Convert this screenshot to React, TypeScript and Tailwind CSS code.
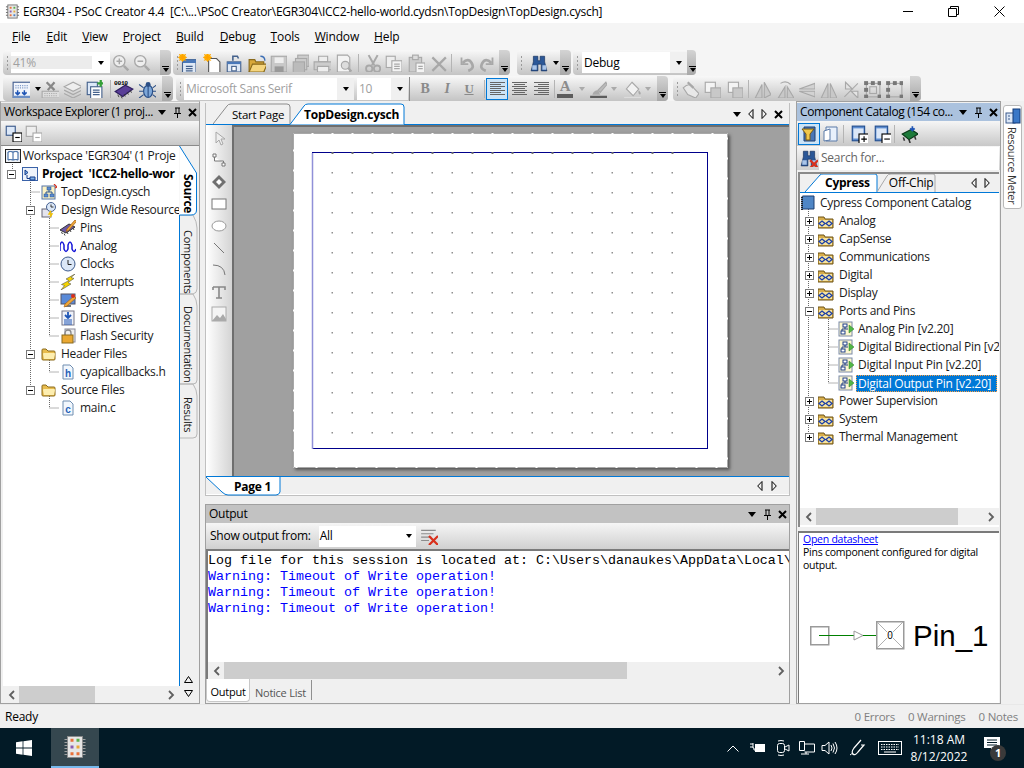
import React from "react"

const I = ({ children, s = 16, className = "" }: { children?: React.ReactNode; s?: number; className?: string }) => (
  <svg width={s} height={s} viewBox="0 0 16 16" className={"shrink-0 " + className}>
    {children}
  </svg>
)

const G = "#a8a8a8"
const GL = "#dcdcdc"

// toolbar icons (mostly disabled grey ones)
const ZoomIcon = ({ plus }: { plus?: boolean }) => (
  <I s={18}>
    <circle cx="6.5" cy="6.5" r="5" fill="#eee" stroke={G} strokeWidth="1.2" />
    <path d="M4 6.5h5" stroke={G} strokeWidth="1.3" />
    {plus && <path d="M6.5 4v5" stroke={G} strokeWidth="1.3" />}
    <path d="M10.5 10.5l4 4" stroke={G} strokeWidth="2.2" />
  </I>
)
const Star = ({ x = 4, y = 3 }: { x?: number; y?: number }) => (
  <g>
    <circle cx={x} cy={y} r="3" fill="#ffb400" />
    <path d={`M${x - 4} ${y}h8M${x} ${y - 4}v8M${x - 3} ${y - 3}l6 6M${x - 3} ${y + 3}l6-6`} stroke="#ffa000" strokeWidth=".8" />
  </g>
)
const NewProject = () => (
  <I s={18}>
    <rect x="4" y="5" width="12" height="12" fill="#dfe9f6" stroke="#44618c" />
    <rect x="4" y="5" width="12" height="3" fill="#4a78b8" />
    <path d="M7 11h6M7 13h6M7 15h6" stroke="#44618c" />
    <Star />
  </I>
)
const NewFile = () => (
  <I s={18}>
    <path d="M5 4h7l3 3v10H5z" fill="#fff" stroke="#555" />
    <Star />
  </I>
)
const OpenProject = () => (
  <I s={18}>
    <rect x="2" y="7" width="12" height="9" fill="#dfe9f6" stroke="#44618c" />
    <rect x="2" y="7" width="12" height="2" fill="#4a78b8" />
    <rect x="6" y="11" width="4" height="4" fill="#fff" stroke="#44618c" />
    <path d="M7 6V2h4l1 2" fill="none" stroke="#44618c" strokeWidth="1.4" />
  </I>
)
const OpenFolder = () => (
  <I s={18}>
    <path d="M1 5h5l1 2h7v9H1z" fill="#d9a83a" stroke="#8a6a1c" />
    <path d="M1 16l3-7h13l-3 7z" fill="#f5d57e" stroke="#8a6a1c" />
    <path d="M11 2q4 0 4 4" fill="none" stroke="#3d6fb5" strokeWidth="1.2" />
  </I>
)
const Save = () => (
  <I s={18}>
    <rect x="2" y="2" width="14" height="14" fill="#c8c8c8" stroke={G} />
    <rect x="5" y="3" width="8" height="5" fill="#eee" />
    <rect x="5" y="11" width="8" height="5" fill="#999" />
  </I>
)
const SaveAll = () => (
  <I s={18}>
    <rect x="6" y="1" width="10" height="10" fill="#ccc" stroke={G} />
    <rect x="4" y="4" width="10" height="10" fill="#ccc" stroke={G} />
    <rect x="2" y="7" width="10" height="10" fill="#bbb" stroke={G} />
  </I>
)
const Print = () => (
  <I s={18}>
    <path d="M5 2h8v5H5z" fill="#eee" stroke={G} />
    <path d="M1 7h16v7H1z" fill="#ccc" stroke={G} />
    <path d="M4 11h10v5H4z" fill="#eee" stroke={G} />
  </I>
)
const Preview = () => (
  <I s={18}>
    <path d="M3 1h9l2 2v13H3z" fill="#f4f4f4" stroke={G} />
    <circle cx="10" cy="10" r="3.5" fill="#ddd" stroke={G} />
    <path d="M12.5 12.5l3 3" stroke={G} strokeWidth="2" />
  </I>
)
const Cut = () => (
  <I s={18}>
    <path d="M5 1l5 9M13 1l-5 9" stroke={G} strokeWidth="1.8" />
    <circle cx="5.5" cy="13" r="2.8" fill="none" stroke={G} strokeWidth="1.6" />
    <circle cx="12.5" cy="13" r="2.8" fill="none" stroke={G} strokeWidth="1.6" />
  </I>
)
const Copy = () => (
  <I s={18}>
    <rect x="2" y="2" width="8" height="10" fill="#eee" stroke={G} />
    <rect x="7" y="6" width="9" height="10" fill="#f4f4f4" stroke={G} />
    <path d="M9 9h5M9 11h5M9 13h5" stroke={G} />
  </I>
)
const Paste = () => (
  <I s={18}>
    <rect x="2" y="3" width="11" height="13" fill="#ccc" stroke={G} />
    <rect x="5" y="1" width="5" height="4" fill="#ddd" stroke={G} />
    <rect x="8" y="8" width="8" height="9" fill="#f4f4f4" stroke={G} />
    <path d="M10 11h4M10 13h4" stroke={G} />
  </I>
)
const Close = () => (
  <I s={18}>
    <path d="M3 3l12 12M15 3L3 15" stroke={G} strokeWidth="2" />
  </I>
)
const Undo = ({ flip }: { flip?: boolean }) => (
  <I s={18} className={flip ? "-scale-x-100" : ""}>
    <path d="M4 3v6h6" fill="none" stroke={G} strokeWidth="1.6" />
    <path d="M5 8q5-5 8 0t-3 7" fill="none" stroke={G} strokeWidth="2.4" />
  </I>
)
const Binoculars = ({ x }: { x?: boolean }) => (
  <I s={18}>
    <path d="M3 2h4v4h2V2h4v5l2 8h-5V9H7v6H1l2-8z" fill="#2b5797" stroke="#17305c" strokeWidth=".6" />
    <rect x="2" y="10" width="4" height="4" fill="#a9c4e8" />
    <rect x="11" y="10" width="3.5" height="4" fill="#a9c4e8" />
    {x && <path d="M9 10l7 7M16 10l-7 7" stroke="#d8301c" strokeWidth="2" />}
  </I>
)
const Triangle = ({ className = "" }: { className?: string }) => (
  <span className={"inline-block w-0 h-0 border-l-[3.5px] border-r-[3.5px] border-t-[4px] border-l-transparent border-r-transparent border-t-black " + className} />
)
const Sep = ({ ml = "" }: { ml?: string }) => <span className={"w-px h-[18px] bg-[#b4b4b4] shrink-0 " + ml} />
const Grip = () => (
  <span className="w-[3px] h-[15px] shrink-0 ml-[3px] bg-[radial-gradient(circle,#9a9a9a_1px,transparent_1px)] bg-[length:3px_4px]" />
)
const Slot = ({ children, w = "w-[22px]" }: { children?: React.ReactNode; w?: string }) => (
  <span className={"flex items-center justify-center shrink-0 h-[22px] " + w}>{children}</span>
)

const Bar = ({ w, ml = "", children }: { w: string; ml?: string; children?: React.ReactNode }) => (
  <div className={"flex items-center h-[25px] rounded-[4px] bg-linear-to-b from-[#f8f8f8] to-[#c4c4c4] overflow-hidden shrink-0 relative " + w + " " + ml}>
    {children}
    <span className="ml-auto w-[11px] h-full bg-linear-to-b from-[#d4d4d4] to-[#a8a8a8] flex flex-col items-center justify-end pb-[3px] shrink-0">
      <span className="w-[7px] h-px bg-black mb-px" />
      <Triangle />
    </span>
  </div>
)

const Combo = ({ w, text, gray, h = "h-[22px]" }: { w: string; text: string; gray?: boolean; h?: string }) => (
  <div className={"flex items-center bg-white shrink-0 " + w + " " + h}>
    <span className={"flex-1 pl-[2px] text-[12px] truncate " + (gray ? "text-[#a0a0a0]" : "text-black")}>{text}</span>
    <span className="w-[17px] h-full flex items-center justify-center bg-[#f0f0f0]">
      <Triangle />
    </span>
  </div>
)

const Menu = () => (
  <div className="h-[27px] flex items-center text-[12px] text-black shrink-0 tracking-[-0.15px]">
    {[
      ["F", "ile", "ml-[12px]"],
      ["E", "dit", "ml-[16px]"],
      ["V", "iew", "ml-[15px]"],
      ["P", "roject", "ml-[15px]"],
      ["B", "uild", "ml-[15px]"],
      ["D", "ebug", "ml-[16px]"],
      ["T", "ools", "ml-[15px]"],
      ["W", "indow", "ml-[15px]"],
      ["H", "elp", "ml-[15px]"],
    ].map(([a, b, c]) => (
      <span key={a} className={c}>
        <span className="underline">{a}</span>
        {b}
      </span>
    ))}
  </div>
)

const TitleBar = () => (
  <div className="h-[23px] bg-white flex items-center shrink-0">
    <I className="ml-[5px]" s={15}>
      <rect x="3" y="1" width="10" height="14" fill="#e6e6e6" stroke="#777" />
      <path d="M1 3h2M1 6h2M1 9h2M1 12h2M13 3h2M13 6h2M13 9h2M13 12h2" stroke="#666" />
      <rect x="5" y="3" width="2" height="2" fill="#e8703a" />
      <rect x="9" y="3" width="2" height="2" fill="#5ab04a" />
      <rect x="5" y="7" width="2" height="2" fill="#8a5bb0" />
      <rect x="9" y="7" width="2" height="2" fill="#e8a83a" />
      <rect x="5" y="11" width="2" height="2" fill="#e8703a" />
      <rect x="9" y="11" width="2" height="2" fill="#4a80c8" />
    </I>
    <span className="ml-[3px] text-[12px] text-black whitespace-pre tracking-[-0.25px]">{"EGR304 - PSoC Creator 4.4  [C:\\...\\PSoC Creator\\EGR304\\ICC2-hello-world.cydsn\\TopDesign\\TopDesign.cysch]"}</span>
    <div className="ml-auto flex items-center mr-[19px] gap-[35px]">
      <span className="w-[10px] h-px bg-black" />
      <svg width="11" height="11" viewBox="0 0 11 11">
        <path d="M.5 2.5h8v8h-8zM2.5 2.5v-2h8v8h-2" fill="none" stroke="#000" />
      </svg>
      <svg width="11" height="11" viewBox="0 0 11 11">
        <path d="M.5.5l10 10M10.5.5l-10 10" stroke="#000" />
      </svg>
    </div>
  </div>
)

const Toolbars = () => (
  <div className="flex flex-col gap-px shrink-0">
    <div className="flex h-[25px] pl-[3px]">
      <Bar w="w-[168px]">
        <Grip />
        <div className="ml-[2px]">
          <div className="w-[99px] h-[21px] flex items-center bg-white">
            <span className="flex-1 pl-[2px] text-[12px] text-[#a0a0a0] bg-[#ececec] h-[13px] leading-[13px] mr-[6px]">41%</span>
            <span className="w-[8px] flex mr-[4px]">
              <Triangle />
            </span>
          </div>
        </div>
        <Slot w="w-[20px] ml-[1px]"><ZoomIcon plus /></Slot>
        <Slot><ZoomIcon /></Slot>
      </Bar>
      <Bar w="w-[337px]" ml="ml-[2px]">
        <Grip />
        <Slot w="w-[22px] -ml-[3px]"><NewProject /></Slot>
        <Slot w="w-[22px] ml-[3px]"><NewFile /></Slot>
        <Slot><OpenProject /></Slot>
        <Slot w="w-[22px] ml-[1px]"><OpenFolder /></Slot>
        <Slot w="w-[22px] -ml-[1px]"><Save /></Slot>
        <Slot><SaveAll /></Slot>
        <Slot><Print /></Slot>
        <Slot w="w-[22px] -ml-[1px]"><Preview /></Slot>
        <Sep ml="ml-[4px]" />
        <Slot w="w-[22px] ml-[2px]"><Cut /></Slot>
        <Slot w="w-[22px] -ml-[1px]"><Copy /></Slot>
        <Slot w="w-[22px] ml-[1px]"><Paste /></Slot>
        <Slot><Close /></Slot>
        <Sep ml="ml-[2px]" />
        <Slot w="w-[22px] ml-[3px]"><Undo /></Slot>
        <Slot><Undo flip /></Slot>
      </Bar>
      <Bar w="w-[54px]" ml="ml-[7px]">
        <Grip />
        <Slot w="w-[26px] ml-[3px]"><Binoculars /></Slot>
        <Triangle className="ml-[1px]" />
      </Bar>
      <Bar w="w-[123px]" ml="ml-[2px]">
        <Grip />
        <div className="ml-[3px]"><Combo w="w-[105px]" text="Debug" h="h-[21px]" /></div>
      </Bar>
    </div>
    <div className="flex h-[25px] pl-[3px]">
      <Bar w="w-[170px]">
        <Slot w="w-[26px] ml-[5px]">
          <I s={18}>
            <rect x="1" y="2" width="16" height="14" fill="#f2f5fb" stroke="#445f90" />
            <path d="M3 5h12M3 7h12" stroke="#7d99c8" strokeDasharray="1 1" />
            <path d="M5 9v4M3 11l2 2 2-2M11 9v4M9 11l2 2 2-2" fill="none" stroke="#1f55b5" strokeWidth="1.3" />
            <rect x="1" y="14" width="16" height="2" fill="#6c8fc5" />
          </I>
        </Slot>
        <Triangle className="ml-[1px]" />
        <Slot w="w-[22px] -ml-[2px]">
          <I s={18}>
            <path d="M1 10h16v6H1z" fill="#ddd" stroke={G} />
            <path d="M3 12h12M3 14h12" stroke={G} strokeDasharray="1 1" />
            <path d="M5 2l7 7M12 2L6 9" stroke="#888" strokeWidth="2" />
          </I>
        </Slot>
        <Slot>
          <I s={18}>
            <path d="M1 6l8-4 8 4-8 4z" fill="#eee" stroke={G} />
            <path d="M1 9l8 4 8-4M1 12l8 4 8-4" fill="none" stroke={G} />
          </I>
        </Slot>
        <Slot>
          <I s={18}>
            <rect x="2" y="2" width="9" height="11" fill="#dce8f8" stroke="#44618c" />
            <rect x="5" y="6" width="10" height="11" fill="#fff" stroke="#44618c" />
            <path d="M7 9h6M7 11h6M7 13h6" stroke="#44618c" />
            <path d="M14 0v6M11 3h6" stroke="#34a038" strokeWidth="2" />
          </I>
        </Slot>
        <Sep ml="ml-[5px]" />
        <Slot w="w-[24px] ml-[1px]">
          <I s={20}>
            <path d="M1 10l8-5 6 3-8 6z" fill="#5a3f98" stroke="#2f1f60" />
            <path d="M3 12.5l1 2M5.5 13.5l1 2M8 12l1 2M10.5 10.5l1 2M13 9l1 2" stroke="#333" strokeWidth=".7" />
            <text x="0" y="4.5" fontSize="5" fontFamily="Liberation Mono" fontWeight="700" fill="#000">0010</text>
          </I>
        </Slot>
        <Slot>
          <I s={18}>
            <ellipse cx="9" cy="10" rx="4" ry="5.5" fill="#7da7d8" stroke="#2b4f86" />
            <circle cx="9" cy="4" r="2.2" fill="#2b4f86" />
            <path d="M5 7L1 4M13 7l4-3M5 10H1M13 10h4M5 13l-4 3M13 13l4 3M9 5v10" stroke="#2b4f86" />
          </I>
        </Slot>
      </Bar>
      <Bar w="w-[492px]" ml="ml-[3px]">
        <Grip />
        <div className="ml-[2px]"><Combo w="w-[170px]" text="Microsoft Sans Serif" gray /></div>
        <div className="ml-[3px]"><Combo w="w-[51px]" text="10" gray /></div>
        <span className="w-px h-[24px] bg-[#888] ml-px" />
        <Slot w="w-[22px] ml-[4px]"><b className="font-['Liberation_Serif',serif] text-[14px] text-[#8a8a8a]">B</b></Slot>
        <Slot><i className="font-['Liberation_Serif',serif] font-bold text-[14px] text-[#8a8a8a]">I</i></Slot>
        <Slot><span className="font-['Liberation_Serif',serif] font-bold text-[13px] text-[#8a8a8a] underline">U</span></Slot>
        <Sep ml="ml-[4px]" />
        {["left", "center", "right"].map((a, i) => (
          <span key={a} className={"w-[22px] h-[22px] flex items-center justify-center shrink-0 " + (i === 0 ? "ml-px border border-[#0078d7] bg-[#cce4f7]" : "")}>
            <svg width="15" height="13" viewBox="0 0 15 13">
              {[0, 2, 4, 6, 8, 10, 12].map((y, j) => {
                const short = j % 2 === 1
                const x = a === "left" || !short ? 0 : a === "center" ? 2 : 4
                return <rect key={y} x={x} y={y} width={short ? 11 : 15} height="1" fill="#666" />
              })}
            </svg>
          </span>
        ))}
        <Sep ml="ml-[2px]" />
        <Slot w="w-[20px]">
          <span className="flex flex-col items-center leading-none">
            <span className="text-[15px] text-[#8c8c8c] font-['Liberation_Serif',serif] font-bold h-[12px] leading-[12px]">A</span>
            <span className="w-[16px] h-[4px] bg-[#5c5c5c] mt-[2px]" />
          </span>
        </Slot>
        <Triangle className="!border-t-[#aaa] ml-[4px]" />
        <Slot w="w-[20px] ml-[3px]">
          <I s={18}>
            <path d="M15 2L8 9l2 2 6-7z" fill="#bbb" stroke={G} />
            <path d="M8 9q-4 0-5 4h7z" fill="#aaa" />
            <rect x="1" y="14" width="16" height="3" fill="#5c5c5c" />
          </I>
        </Slot>
        <Triangle className="!border-t-[#aaa] ml-[3px]" />
        <Slot w="w-[22px] ml-[4px]">
          <I s={18}>
            <path d="M8 2l6 6-5 6-6-6z" fill="#f2f2f2" stroke={G} />
            <path d="M14 9q3 3 1 4-2-1-1-4z" fill={G} />
            <rect x="1" y="15" width="15" height="2" fill={GL} />
          </I>
        </Slot>
        <Triangle className="!border-t-[#aaa] ml-[2px]" />
      </Bar>
      <Bar w="w-[248px]" ml="ml-[5px]">
        <Grip />
        <Slot>
          <I s={18}>
            <path d="M2 7q6-6 10 1l4 4-3 4-7-3z" fill="#e8e8e8" stroke={G} />
            <path d="M6 2l5 5" stroke={G} strokeWidth="2" />
          </I>
        </Slot>
        {[0, 1].map((k) => (
          <Slot key={k}>
            <I s={18}>
              <rect x={k ? 3 : 2} y="2" width="9" height="9" fill="#f4f4f4" stroke={G} />
              <rect x="7" y="7" width="9" height="9" fill="#c8c8c8" stroke={G} />
            </I>
          </Slot>
        ))}
        <Sep ml="ml-[3px]" />
        <Slot w="w-[23px] ml-px">
          <I s={18}>
            <path d="M8 4v12H2zM10 2v14l6-3z" fill="#c8c8c8" stroke={G} />
          </I>
        </Slot>
        <Slot w="w-[23px]">
          <I s={18}>
            <path d="M8 6v10H2zM10 6v10h6z" fill="#c8c8c8" stroke={G} />
            <path d="M4 3q5-3 9 1" fill="none" stroke={G} />
          </I>
        </Slot>
        <Slot w="w-[22px] -ml-px">
          <I s={18}>
            <path d="M16 3L2 8h14zM16 10H2l14 5z" fill="#d2d2d2" stroke={G} />
          </I>
        </Slot>
        <Slot>
          <I s={18}>
            <path d="M8 3v13H2zM10 3v13h6z" fill="#c8c8c8" stroke={G} />
          </I>
        </Slot>
        <Slot>
          <I s={18}>
            <path d="M4 2l6 6H4zM9 10h6v6z" fill="#e4e4e4" stroke={G} />
            <path d="M15 3L3 15" stroke={G} />
          </I>
        </Slot>
        {[0, 1].map((k) => (
          <Slot key={k}>
            <I s={18}>
              <rect x="3" y="3" width="12" height="12" fill="none" stroke={G} />
              {k === 0 && <rect x="6" y="6" width="6" height="6" fill="none" stroke={G} />}
              {[[1, 1], [13, 1], [1, 13], [13, 13], [7, 1], [1, 7]].map(([x, y]) => (
                <rect key={x + "-" + y} x={x} y={y} width="3.5" height="3.5" fill="#777" />
              ))}
            </I>
          </Slot>
        ))}
      </Bar>
    </div>
  </div>
)

const PanelControls = () => (
  <div className="flex items-center gap-[6px] shrink-0 mr-[2px]">
    <Triangle className="border-l-[4px] border-r-[4px] border-t-[5px] mr-[1px]" />
    <svg width="9" height="11" viewBox="0 0 9 11">
      <path d="M2 1h5M3 1v5M6 1v5M1 6.5h7M4.5 7v4" stroke="#000" fill="none" />
    </svg>
    <svg width="9" height="9" viewBox="0 0 9 9">
      <path d="M1 1l7 7M8 1L1 8" stroke="#000" strokeWidth="2" />
    </svg>
  </div>
)

const HScroll = ({ thumb, className = "" }: { thumb: string; className?: string }) => (
  <div className={"h-[17px] bg-[#f0f0f0] flex items-center shrink-0 " + className}>
    <span className="w-[16px] flex justify-center shrink-0">
      <svg width="7" height="10" viewBox="0 0 7 10">
        <path d="M6 1L2 5l4 4" stroke="#606060" strokeWidth="1.8" fill="none" />
      </svg>
    </span>
    <span className={"h-full bg-[#cdcdcd] shrink-0 " + thumb} />
    <span className="ml-auto w-[16px] flex justify-center shrink-0">
      <svg width="7" height="10" viewBox="0 0 7 10">
        <path d="M1 1l4 4-4 4" stroke="#606060" strokeWidth="1.8" fill="none" />
      </svg>
    </span>
  </div>
)

// tree icons
const FolderIcon = () => (
  <I>
    <path d="M1 4q0-1 1-1h3l2 2h6q1 0 1 1v7q0 1-1 1H2q-1 0-1-1z" fill="#e8bc4e" stroke="#8a6a1c" />
    <path d="M2 8q0-1 1-1h10q1 0 1 1l-1 5H3z" fill="#fdeeb0" />
  </I>
)
const FileIcon = ({ l }: { l: string }) => (
  <I>
    <path d="M3 1h7l3 3v11H3z" fill="#f2f7fd" stroke="#6f8db0" />
    <text x="8" y="12.5" fontSize="10" textAnchor="middle" fontWeight="700" fill="#1f62b8" fontFamily="Liberation Sans">{l}</text>
  </I>
)
const LEFT_TREE: { label: string; x: 1 | 2 | 3; exp?: boolean; bold?: boolean; icon: React.ReactNode }[] = [
  {
    label: "Project  'ICC2-hello-wor", x: 1, exp: true, bold: true,
    icon: (
      <I>
        <rect x="0.5" y="1.5" width="15" height="13" fill="#eef3fb" stroke="#3a62a8" />
        <path d="M3 4v5l3-2.5zM8 11h5v3H8z" fill="#7fb0e8" stroke="#123a88" />
        <path d="M5 9v3.5h3" fill="none" stroke="#123a88" />
      </I>
    ),
  },
  {
    label: "TopDesign.cysch", x: 2,
    icon: (
      <I>
        <rect x="1" y="2" width="13" height="13" fill="#fdf3c4" stroke="#5676a8" />
        <rect x="6" y="3" width="4" height="3" fill="#5c8cd0" stroke="#24508f" strokeWidth=".5" />
        <rect x="3" y="10" width="4" height="3" fill="#5c8cd0" stroke="#24508f" strokeWidth=".5" />
        <rect x="9" y="10" width="4" height="3" fill="#5c8cd0" stroke="#24508f" strokeWidth=".5" />
        <path d="M8 6v2M5 10V8h6v2" fill="none" stroke="#24508f" />
        <path d="M13 0l3 3-2 1" stroke="#d8301c" fill="none" strokeWidth="1.2" />
      </I>
    ),
  },
  {
    label: "Design Wide Resource", x: 2, exp: true,
    icon: (
      <I>
        <rect x="1" y="7" width="9" height="8" fill="#e4e4ee" stroke="#667" />
        <circle cx="10" cy="5" r="4.5" fill="#dbe7f7" stroke="#445f90" />
        <path d="M10 2.5V5h2.5" stroke="#333" fill="none" />
        <path d="M10 9l-2 3h3l-2 3" stroke="#f2c200" strokeWidth="1.4" fill="none" />
      </I>
    ),
  },
  {
    label: "Pins", x: 3,
    icon: (
      <I>
        <path d="M0 10l9-6 6 3-9 6z" fill="#6c5aa8" stroke="#333" />
        <path d="M1.5 12l1 2M4 13.5l1 2M7 12l1 2M10 10l1 2M13 8l1 2" stroke="#444" />
        <path d="M15 0l-8 9-1 2.5 2.5-1 8-9z" fill="#f0a838" stroke="#a05a10" strokeWidth=".7" />
      </I>
    ),
  },
  {
    label: "Analog", x: 3,
    icon: (
      <I>
        <path d="M0 12V6q2-6 4 0v4q2 5 4 0V6q2-6 4 0v4q2 5 4 0" transform="translate(0 1)" fill="none" stroke="#1616d8" strokeWidth="1.5" />
      </I>
    ),
  },
  {
    label: "Clocks", x: 3,
    icon: (
      <I>
        <circle cx="8" cy="8" r="7" fill="#dbe7f7" stroke="#3c5a8c" />
        <path d="M8 4v4.5h3.5" stroke="#222" fill="none" />
      </I>
    ),
  },
  {
    label: "Interrupts", x: 3,
    icon: (
      <I>
        <path d="M15 0L6 5l3 1.5-7.5 4 3 1L1 16l10-6-3-1.5 6-4-3-1z" fill="#f5d400" stroke="#555" strokeWidth=".6" />
      </I>
    ),
  },
  {
    label: "System", x: 3,
    icon: (
      <I>
        <rect x="1" y="2" width="14" height="10" fill="#5a8ad8" stroke="#556" />
        <path d="M5 14h6" stroke="#777" strokeWidth="2" />
        <path d="M5 12l9-8 2 2-9 8-3 1z" fill="#f0a838" stroke="#a05a10" strokeWidth=".6" />
        <circle cx="13" cy="4" r="2" fill="#d8301c" />
      </I>
    ),
  },
  {
    label: "Directives", x: 3,
    icon: (
      <I>
        <rect x="2" y="1" width="12" height="14" fill="#eef1f8" stroke="#778" />
        <path d="M8 2v5M5 5l3 3 3-3" stroke="#1f55b5" strokeWidth="1.8" fill="none" />
        <path d="M4 10h8M4 12h8M4 14h8" stroke="#1f55b5" />
      </I>
    ),
  },
  {
    label: "Flash Security", x: 3,
    icon: (
      <I>
        <rect x="5" y="1" width="10" height="13" fill="#eee" stroke="#889" />
        <path d="M5 7V5a3 3 0 0 1 6 0v2" stroke="#888" fill="none" strokeWidth="1.3" />
        <rect x="2" y="7" width="11" height="8" fill="#eaa832" stroke="#8a6a1c" />
      </I>
    ),
  },
  { label: "Header Files", x: 2, exp: true, icon: <FolderIcon /> },
  { label: "cyapicallbacks.h", x: 3, icon: <FileIcon l="h" /> },
  { label: "Source Files", x: 2, exp: true, icon: <FolderIcon /> },
  { label: "main.c", x: 3, icon: <FileIcon l="c" /> },
]

const Expander = ({ open }: { open?: boolean }) => (
  <svg width="9" height="9" viewBox="0 0 9 9" className="shrink-0 relative">
    <rect x=".5" y=".5" width="8" height="8" fill="#fff" stroke="#7a7a7a" />
    <path d={open ? "M2 4.5h5" : "M2 4.5h5M4.5 2v5"} stroke="#000" />
  </svg>
)

const TreeRow = ({ label, pad, exp, bold, icon }: { label: string; pad: string; exp?: boolean; bold?: boolean; icon: React.ReactNode }) => (
  <div className={"relative h-[18px] flex items-center whitespace-pre " + pad}>
    <span className="w-[15px] flex shrink-0">{exp && <Expander open />}</span>
    {icon}
    <span className={"ml-[4px] text-[12px] " + (bold ? "font-bold text-black" : "text-[#1a1a1a]")}>{label}</span>
  </div>
)

const VTab = ({ label, h, active, textClass = "" }: { label: string; h: string; active?: boolean; textClass?: string }) => (
  <div className={"relative w-[18px] flex justify-center shrink-0 " + h}>
    <span className={"[writing-mode:vertical-rl] leading-[17px] whitespace-nowrap z-10 " + (active ? "text-[12px] font-bold text-black" : "text-[11px] text-[#1a1a1a]") + " " + textClass}>
      {label}
    </span>
  </div>
)

const LeftPanel = () => (
  <div className="w-[200px] shrink-0 flex flex-col border border-[#a0a0a0] border-t-[#c8c8c8] bg-[#f0f0f0] pt-px">
    <div className="h-[18px] bg-[#c2c2c2] flex items-center pl-[3px] shrink-0 justify-between">
      <span className="text-[12px] text-black whitespace-nowrap tracking-[-0.4px]">Workspace Explorer (1 proj...</span>
      <PanelControls />
    </div>
    <div className="h-[24px] flex items-center pl-[3px] gap-[2px] bg-linear-to-b from-[#f6f6f6] to-[#c8c8c8] shrink-0">
      <I s={18}>
        <rect x="2" y="2" width="8" height="8" fill="#dce8f8" stroke="#3c5a8c" />
        <rect x="8" y="8" width="8" height="8" fill="#fff" stroke="#000" />
        <path d="M10 12h4" stroke="#000" />
      </I>
      <I s={18}>
        <rect x="2" y="2" width="9" height="9" fill="#eee" stroke={G} />
        <rect x="8" y="8" width="8" height="8" fill="#fff" stroke={G} />
        <path d="M10 12h4" stroke={G} />
      </I>
    </div>
    <div className="flex-1 flex min-h-0 border-t border-[#8a8a8a]">
      <div className="w-[176px] ml-[2px] bg-white flex flex-col shrink-0 min-h-0">
        <div className="flex-1 relative overflow-hidden pt-[1px]">
          <svg className="absolute inset-0" width="176" height="535">
            <path
              d="M9.5 14v10M27.5 32v212M27.5 46h10M46.5 68v122M46.5 82h10M46.5 100h10M46.5 118h10M46.5 136h10M46.5 154h10M46.5 172h10M46.5 190h10M46.5 212v14h10M46.5 248v14h10"
              stroke="#6a6a6a"
              strokeDasharray="1 1"
              fill="none"
            />
          </svg>
          <div className="relative h-[18px] flex items-center pl-[2px] whitespace-nowrap">
            <I>
              <rect x="0.5" y="1.5" width="15" height="13" fill="#eef1f5" stroke="#222" />
              <path d="M3 4q2-1 5 0 3-1 5 0v8q-2-1-5 0-3-1-5 0zM8 4v8" fill="#fff" stroke="#2a5a9a" />
            </I>
            <span className="ml-[2px] text-[12px] text-[#1a1a1a]">{"Workspace 'EGR304' (1 Proje"}</span>
          </div>
          {LEFT_TREE.map((n) => (
            <TreeRow
              key={n.label}
              label={n.label}
              exp={n.exp}
              bold={n.bold}
              icon={n.icon}
              pad={n.x === 1 ? "pl-[4px]" : n.x === 2 ? "pl-[23px]" : "pl-[42px]"}
            />
          ))}
        </div>
        <HScroll thumb="w-[76px]" />
      </div>
      <div className="relative w-[18px] shrink-0 bg-[#f0f0f0] flex flex-col">
        <svg className="absolute left-0 top-0" width="19" height="540">
          <path d="M.5 69V540" stroke="#0078d7" />
          <path d="M1 69L14 69Q18 76 18 82V143Q18 147 14 148H1M1 148H14Q18 154 18 160V234Q18 238 14 238H1M1 238H14Q18 244 18 250V288Q18 292 14 292H1" fill="none" stroke="#b8b8b8" />
          <path d="M.5 0L17.5 27V64Q17.5 69 12 69H.5" fill="#fff" stroke="#0078d7" />
        </svg>
        <VTab label="Source" h="h-[69px]" active textClass="mt-[28px]" />
        <VTab label="Components" h="h-[79px]" textClass="mt-[15px]" />
        <VTab label="Documentation" h="h-[90px]" textClass="mt-[12px]" />
        <VTab label="Results" h="h-[54px]" textClass="mt-[13px]" />
        <div className="mt-auto flex flex-col items-center gap-[7px] pb-[6px] relative">
          <svg width="9" height="7" viewBox="0 0 9 7"><path d="M.5 6.5h8L4.5.5z" fill="none" stroke="#000" /></svg>
          <svg width="9" height="7" viewBox="0 0 9 7"><path d="M.5.5h8l-4 6z" fill="none" stroke="#000" /></svg>
        </div>
      </div>
    </div>
  </div>
)

const DOTS_X = Array.from({ length: 18 }, (_, i) => 20 + i * 20)
const DOTS_Y = Array.from({ length: 14 }, (_, i) => 20 + i * 20)

const Toolbox = () => (
  <div className="w-[26px] bg-linear-to-r from-[#ffffff] to-[#d4d4d4] shrink-0 flex flex-col items-center pt-[2px]">
    {[
      <path key="a" d="M5 2v11l3-3 2 5 2-1-2-5h4z" fill="#eee" stroke={G} />,
      <path key="b" d="M2 2h3v3H2zM11 11h3v3h-3zM3.5 5v4h9v2" fill="#fff" stroke="#777" />,
      <g key="c"><path d="M8 1l7 7-7 7-7-7z" fill="#707070" /><path d="M8 5l3 3-3 3-3-3z" fill="#fff" /></g>,
      <rect key="d" x="1" y="3" width="14" height="10" fill="#fff" stroke="#777" />,
      <ellipse key="e" cx="8" cy="8" rx="7" ry="5" fill="#fff" stroke="#999" />,
      <path key="f" d="M3 3l10 10" stroke="#777" />,
      <path key="g" d="M2 3q11 0 12 10" fill="none" stroke="#777" />,
      <path key="h" d="M2 3h12v3M8 3v11M5 14h6M2 3v3" fill="none" stroke="#888" strokeWidth="1.6" />,
      <g key="i"><rect x="1" y="1" width="14" height="14" fill="#f4f4f4" stroke="#aaa" /><path d="M1 15l5-6 3 3 3-4 3 5v2z" fill="#aaa" /></g>,
    ].map((s, i) => (
      <span key={i} className="h-[22px] flex items-center justify-center">
        <I>{s}</I>
      </span>
    ))}
  </div>
)

const Schematic = () => (
  <div className="flex-1 bg-[#a0a0a0] border-t-[2px] border-l-[2px] border-[#6e6e6e] relative overflow-hidden">
    {/* sheet on the canvas */}
    <div className="absolute left-[59px] top-[6px] w-[435px] h-[335px] bg-white shadow-[2px_2px_3px_#555]">
      <svg width="435" height="335" className="absolute inset-0">
        <rect x=".5" y=".5" width="434" height="334" fill="none" stroke="#a8a8a8" strokeDasharray="18 2" />
        <rect x="19.5" y="19.5" width="395" height="296" fill="none" stroke="#00008b" />
        <path d="M19.5 20v296" stroke="#9090d8" strokeWidth="1.5" />
        {DOTS_X.map((x) =>
          DOTS_Y.map((y) => <rect key={x + "-" + y} x={x + 18.5} y={y + 19} width="1.5" height="1.5" fill="#909090" />),
        )}
        {DOTS_X.map((x) => (
          <rect key={x} x={x + 18.5} y="19" width="2" height="2" fill="#707070" />
        ))}
      </svg>
    </div>
  </div>
)

const DocTabs = () => (
  <div className="h-[22px] relative flex items-end shrink-0 border-b border-[#0078d7] bg-[#f0f0f0]">
    <svg className="absolute left-[7px] bottom-[-1px]" width="80" height="22">
      <path d="M0 21L14 3Q15 1 18 1H74Q77 1 77 4V21" fill="#f0f0f0" stroke="#8c8c8c" />
    </svg>
    <svg className="absolute left-[84px] bottom-[-1px]" width="120" height="22">
      <path d="M0 21.5L14 3Q15 1 18 1H111Q114 1 114 4V21.5" fill="#fff" stroke="#0078d7" />
    </svg>
    <span className="relative ml-[26px] text-[11.5px] h-[18px] leading-[18px] text-black">Start Page</span>
    <span className="relative ml-[20px] text-[12px] font-bold h-[18px] leading-[18px] text-black">TopDesign.cysch</span>
    <div className="ml-auto flex items-center gap-[7px] mr-[6px] relative h-[20px]">
      <Triangle className="border-l-[4px] border-r-[4px] border-t-[5px]" />
      <svg width="6" height="10" viewBox="0 0 6 10"><path d="M5 .5v9L.7 5z" fill="none" stroke="#000" /></svg>
      <svg width="6" height="10" viewBox="0 0 6 10"><path d="M1 .5v9L5.3 5z" fill="none" stroke="#000" /></svg>
      <svg width="9" height="9" viewBox="0 0 9 9"><path d="M1 1l7 7M8 1L1 8" stroke="#000" strokeWidth="2" /></svg>
    </div>
  </div>
)

const PageTabs = () => (
  <div className="h-[18px] relative flex border-t border-[#0078d7] bg-[#f0f0f0] shrink-0">
    <svg className="absolute left-0 top-[-1px]" width="80" height="21">
      <path d="M0 1L16 16Q19 19 22 19H70Q73 19 74 16V1" fill="#fff" stroke="#0078d7" />
    </svg>
    <span className="relative ml-[28px] text-[12px] font-bold leading-[19px] text-black">Page 1</span>
    <div className="ml-auto flex items-center gap-[8px] mr-[12px] relative">
      <svg width="6" height="10" viewBox="0 0 6 10"><path d="M5 .5v9L.7 5z" fill="none" stroke="#000" /></svg>
      <svg width="6" height="10" viewBox="0 0 6 10"><path d="M1 .5v9L5.3 5z" fill="none" stroke="#000" /></svg>
    </div>
  </div>
)

const OutputPanel = () => (
  <div className="h-[200px] flex flex-col border border-[#a0a0a0] bg-[#f0f0f0] shrink-0">
    <div className="h-[18px] bg-[#c2c2c2] flex items-center pl-[3px] justify-between shrink-0">
      <span className="text-[12px] text-black">Output</span>
      <PanelControls />
    </div>
    <div className="h-[26px] flex items-center pl-[4px] bg-linear-to-b from-[#f6f6f6] to-[#d0d0d0] shrink-0">
      <span className="text-[12px] text-black">Show output from:</span>
      <div className="ml-[8px] w-[97px] h-[21px] bg-white flex items-center">
        <span className="flex-1 pl-[1px] text-[12px] text-black">All</span>
        <span className="w-[14px] flex justify-center"><Triangle /></span>
      </div>
      <I s={18} className="ml-[4px]">
        <path d="M1 3h13M1 6h11M1 9h9M1 12h7" stroke="#8c8c8c" />
        <path d="M8 8l8 8M16 8l-8 8" stroke="#d8301c" strokeWidth="2" />
      </I>
    </div>
    <div className="flex-1 min-h-0 border-t-[2px] border-l-[2px] border-[#7a7a7a] bg-white flex flex-col">
      <div className="flex-1 pt-[2px] overflow-hidden font-['Liberation_Mono',monospace] text-[13.33px] leading-[16px] tracking-normal whitespace-pre text-[#0000ff]">
        <div className="text-black">{"Log file for this session is located at: C:\\Users\\danaukes\\AppData\\Local\\"}</div>
        <div>Warning: Timeout of Write operation!</div>
        <div>Warning: Timeout of Write operation!</div>
        <div>Warning: Timeout of Write operation!</div>
      </div>
      <HScroll thumb="w-[403px]" />
    </div>
    <div className="h-[24px] flex items-start relative shrink-0">
      <span className="h-[23px] w-[44px] bg-white border border-t-0 border-[#c8c8c8] rounded-b-[4px] text-[11px] leading-[25px] text-center text-black">Output</span>
      <span className="h-[20px] text-[11px] leading-[25px] text-[#555] ml-[5px] pr-[5px] border-r border-[#909090] mt-px">Notice List</span>
    </div>
  </div>
)

const Center = () => (
  <div className="w-[585px] ml-[5px] mt-[2px] shrink-0 flex flex-col gap-[8px]">
    <div className="flex-1 min-h-0 flex flex-col border-b border-l border-r border-[#c0c0c0] bg-white pb-[1px]">
      <DocTabs />
      <div className="flex-1 min-h-0 flex">
        <Toolbox />
        <Schematic />
      </div>
      <PageTabs />
    </div>
    <OutputPanel />
  </div>
)

const CatalogFolder = () => (
  <I>
    <path d="M0 4h6l1 2h8v9H0z" fill="#d8ae4c" stroke="#6d5216" />
    <path d="M1 7h13v7H1z" fill="#f6e39e" />
    <path d="M4 8l3 2.5L4 13 1 10.5zM11 8l3 2.5-3 2.5-3-2.5z" fill="none" stroke="#1b3fa8" strokeWidth="1.3" />
  </I>
)
const PinItem = () => (
  <I>
    <rect x="1" y="1" width="13" height="14" fill="#fdf7d0" stroke="#7a8aa8" />
    <rect x="5" y="3" width="4" height="3" fill="#fff" stroke="#1f3f88" />
    <rect x="3" y="10" width="4" height="3" fill="#fff" stroke="#1f3f88" />
    <path d="M7 6v2H4v2M7 8h3" stroke="#1f3f88" fill="none" />
    <path d="M11 4l5 4-5 4z" fill="#52b848" stroke="#2a7a20" strokeWidth=".5" />
  </I>
)

const CATALOG_TOP = ["Analog", "CapSense", "Communications", "Digital", "Display"]
const CATALOG_BOTTOM = ["Power Supervision", "System", "Thermal Management"]
const PINS = ["Analog Pin [v2.20]", "Digital Bidirectional Pin [v2.20]", "Digital Input Pin [v2.20]", "Digital Output Pin [v2.20]"]

const CatalogRow = ({ label, open }: { label: string; open?: boolean }) => (
  <div className="relative h-[18px] flex items-center pl-[5px] whitespace-nowrap">
    <span className="w-[13px] flex shrink-0"><Expander open={open} /></span>
    <CatalogFolder />
    <span className="ml-[5px] text-[12px] text-[#1a1a1a] tracking-[-0.3px]">{label}</span>
  </div>
)

const RightPanel = () => (
  <div className="w-[205px] ml-[6px] shrink-0 flex flex-col border border-[#a0a0a0] bg-[#f0f0f0] pt-px">
    <div className="h-[18px] bg-[#abc2de] flex items-center pl-[3px] justify-between shrink-0">
      <span className="text-[12px] text-black whitespace-nowrap tracking-[-0.4px]">Component Catalog (154 co...</span>
      <PanelControls />
    </div>
    <div className="h-[25px] flex items-center pl-[1px] bg-linear-to-b from-[#f6f6f6] to-[#c8c8c8] shrink-0">
      <span className="w-[22px] h-[22px] flex items-center justify-center border border-[#0078d7] bg-[#cce4f7]">
        <I>
          <path d="M3 1h11v14H3z" fill="#4a78b8" stroke="#1f3f70" />
          <path d="M1 3h12l-4 5v6H5V8z" fill="#f0c84a" stroke="#7a5a10" />
        </I>
      </span>
      <Slot>
        <I>
          <path d="M3 1h11v14H3z" fill="#e8f0fb" stroke="#5a7aa8" />
          <path d="M1 5l6-2v11l-6 1z" fill="#fff" stroke="#5a7aa8" />
        </I>
      </Slot>
      <Sep ml="ml-[1px]" />
      {[false, true].map((minus) => (
        <Slot key={String(minus)} w={minus ? "w-[23px]" : "w-[23px] ml-[3px]"}>
          <I s={18}>
            <rect x="2" y="1" width="11" height="13" fill="#5c8cd0" stroke="#244f8f" />
            <rect x="3" y="3" width="9" height="9" fill="#dbe7f7" />
            <rect x="8" y="8" width="9" height="9" fill="#fff" stroke="#000" />
            <path d={minus ? "M10 12.5h5" : "M10 12.5h5M12.5 10v5"} stroke="#000" />
          </I>
        </Slot>
      ))}
      <Sep ml="ml-[1px]" />
      <Slot w="w-[24px] ml-[2px]">
        <I s={18}>
          <path d="M2 8l8-4 6 4-8 5z" fill="#1d7a3a" stroke="#0a3a18" />
          <path d="M3 11l1 3M8 13l1 3M13 10l1 3" stroke="#333" strokeWidth="1.4" />
          <path d="M11 1v4M9 3l2 2 2-2" stroke="#1f55b5" strokeWidth="1.5" fill="none" />
        </I>
      </Slot>
    </div>
    <div className="h-[24px] flex items-center pl-[3px] bg-linear-to-b from-[#f6f6f6] to-[#d0d0d0] shrink-0">
      <Binoculars x />
      <div className="ml-[1px] w-[180px] h-[23px] bg-white flex items-center pl-[2px] text-[12px] text-[#666]">Search for...</div>
    </div>
    <div className="mt-[2px] mx-[1px] flex-1 min-h-0 border-t-[2px] border-l-[2px] border-[#8a8a8a] bg-white flex flex-col overflow-hidden">
      <div className="h-[19px] relative flex items-end border-b border-[#0078d7] bg-[#f0f0f0] shrink-0 pl-[4px]">
        <svg className="absolute left-[5px] bottom-[-1px]" width="75" height="20">
          <path d="M0 19L15 2Q16 1 18 1H70Q72 1 72 3V19" fill="#fff" stroke="#0078d7" />
        </svg>
        <svg className="absolute left-[77px] bottom-[-1px]" width="65" height="20">
          <path d="M0 19L10 3Q11 1 14 1H56Q58 1 58 3V19" fill="#f0f0f0" stroke="#a8a8a8" />
        </svg>
        <span className="relative ml-[21px] text-[12px] font-bold h-[18px] leading-[18px] text-black">Cypress</span>
        <span className="relative ml-[19px] text-[12px] h-[18px] leading-[18px] text-black">Off-Chip</span>
        <div className="ml-auto mr-[9px] flex items-center gap-[7px] h-[18px] relative">
          <svg width="6" height="10" viewBox="0 0 6 10"><path d="M5 .5v9L.7 5z" fill="none" stroke="#000" /></svg>
          <svg width="6" height="10" viewBox="0 0 6 10"><path d="M1 .5v9L5.3 5z" fill="none" stroke="#000" /></svg>
        </div>
      </div>
      <div className="flex-1 min-h-0 relative overflow-hidden pt-[1px] w-[199px]">
        <svg className="absolute inset-0" width="199" height="250">
          <path d="M8.5 14v230M28.5 122v68M28.5 136h10M28.5 154h10M28.5 172h10M28.5 190h10" stroke="#6a6a6a" strokeDasharray="1 1" fill="none" />
        </svg>
        <div className="relative h-[18px] flex items-center whitespace-nowrap">
          <I>
            <path d="M2 2q0-1 1-1h11v13H3q-1 0-1 1z" fill="#4f86c6" stroke="#1f3f70" />
            <path d="M2 2v13" stroke="#222" strokeDasharray="1 1" strokeWidth="2" />
          </I>
          <span className="ml-[4px] text-[12px] text-[#1a1a1a] tracking-[-0.3px]">Cypress Component Catalog</span>
        </div>
        {CATALOG_TOP.map((c) => (
          <CatalogRow key={c} label={c} />
        ))}
        <CatalogRow label="Ports and Pins" open />
        {PINS.map((p, i) => (
          <div key={p} className="relative h-[18px] flex items-center pl-[38px] whitespace-nowrap overflow-hidden">
            <PinItem />
            {i === 3 ? (
              <span className="ml-[2px] pl-[1px] h-[17px] w-[141px] shrink-0 leading-[15px] text-[12px] text-white bg-[#0078d7] border border-dotted border-[#ffa040] overflow-hidden">{p}</span>
            ) : (
              <span className="ml-[4px] text-[12px] text-[#1a1a1a]">{p}</span>
            )}
          </div>
        ))}
        {CATALOG_BOTTOM.map((c) => (
          <CatalogRow key={c} label={c} />
        ))}
      </div>
      <HScroll thumb="w-[142px]" className="mb-[2px]" />
    </div>
    <div className="h-[172px] mt-[4px] mx-[1px] shrink-0 border-t-[2px] border-l-[1px] border-[#7a7a7a] bg-white pl-[4px] flex flex-col">
      <a className="text-[10.5px] leading-[13px] text-[#0000ff] underline">Open datasheet</a>
      <p className="text-[10.5px] leading-[13px] text-black">Pins component configured for digital output.</p>
      <div className="mt-[49px] flex items-center">
        <svg width="103" height="30" viewBox="0 0 103 30" className="ml-[7px] shrink-0">
          <rect x=".75" y="5.75" width="18" height="18" fill="#fff" stroke="#9a9a9a" strokeWidth="1.5" />
          <path d="M9 14.5h57" stroke="#008000" />
          <path d="M44 10v9l9-4.5z" fill="#fff" stroke="#9a9a9a" />
          <rect x="66.75" y=".75" width="27" height="27" fill="#fff" stroke="#9a9a9a" strokeWidth="1.5" />
          <path d="M67 1l26 26M93 1L67 27" stroke="#b0b0b0" />
          <text x="80" y="18" fontSize="10" textAnchor="middle" fontFamily="Liberation Sans" fill="#000" stroke="#fff" strokeWidth="2" paintOrder="stroke">0</text>
        </svg>
        <span className="font-['Liberation_Sans',sans-serif] text-[29.5px] leading-[30px] tracking-normal text-black">Pin_1</span>
      </div>
    </div>
  </div>
)

const ResourceTab = () => (
  <div className="w-[19px] ml-[2px] h-[104px] mt-[4px] bg-white border border-[#b8b8b8] rounded-[3px] flex flex-col items-center pt-[2px] shrink-0">
    <I>
      <rect x="1" y="5" width="9" height="10" fill="#dbe7f7" stroke="#3c5a8c" />
      <rect x="8" y="1" width="7" height="14" fill="#3a78c8" stroke="#123a78" />
      <path d="M3 8h2M3 11h2" stroke="#3c5a8c" />
    </I>
    <span className="[writing-mode:vertical-rl] text-[11px] leading-[15px] mt-[3px] text-[#333] whitespace-nowrap">Resource Meter</span>
  </div>
)

const StatusBar = () => (
  <div className="h-[24px] bg-[#f0f0f0] flex items-center text-[12px] shrink-0 border-t border-[#e8e8e8]">
    <span className="ml-[5px] text-black">Ready</span>
    <div className="ml-auto flex items-center gap-[13px] mr-[6px] text-[11.5px] text-[#7f7f7f]">
      <span>0 Errors</span>
      <span>0 Warnings</span>
      <span>0 Notes</span>
    </div>
  </div>
)

const Taskbar = () => (
  <div className="h-[40px] bg-[#021a26] flex items-center shrink-0">
    <svg width="16" height="16" viewBox="0 0 16 16" className="ml-[16px] shrink-0">
      <path d="M0 2.2L6.6 1.3V7.6H0zM7.4 1.2L16 0v7.6H7.4zM0 8.4h6.6v6.3L0 13.8zM7.4 8.4H16V16l-8.6-1.2z" fill="#fff" />
    </svg>
    <div className="ml-[19px] w-[48px] h-full bg-[#35474f] border-b-[2px] border-[#76b9ed] flex items-center justify-center shrink-0">
      <I s={24}>
        <rect x="3" y="1" width="10" height="14" fill="#e6e6e6" stroke="#8a8a8a" strokeWidth=".6" />
        <path d="M1 3h2M1 5h2M1 7h2M1 9h2M1 11h2M1 13h2M13 3h2M13 5h2M13 7h2M13 9h2M13 11h2M13 13h2" stroke="#aaa" strokeWidth=".6" />
        <rect x="5" y="2.5" width="2" height="2" fill="#e8703a" />
        <rect x="9" y="2.5" width="2" height="2" fill="#5ab04a" />
        <rect x="5" y="7" width="2" height="2" fill="#8a5bb0" />
        <rect x="9" y="7" width="2" height="2" fill="#e8a83a" />
        <rect x="5" y="11.5" width="2" height="2" fill="#e8703a" />
        <rect x="9" y="11.5" width="2" height="2" fill="#e8703a" />
      </I>
    </div>
    <div className="ml-auto flex items-center shrink-0 text-white">
      <svg width="12" height="7" viewBox="0 0 12 7" className="mr-[11px]"><path d="M.5 6.5L6 1l5.5 5.5" stroke="#fff" fill="none" /></svg>
      <svg width="16" height="12" viewBox="0 0 16 12" className="mr-[10px]">
        <path d="M0 2h3M0 5h3M3 1v5h1v2h2" stroke="#fff" fill="none" />
        <rect x="5.5" y="2.5" width="9" height="7" fill="#fff" stroke="#fff" />
      </svg>
      <svg width="14" height="18" viewBox="0 0 14 18" className="mr-[9px]">
        <rect x="1.5" y="4.5" width="7" height="9" rx="2" fill="none" stroke="#fff" />
        <path d="M9 8l4-2v6l-4-2M2 2q3-1 6 0M2 16q3 1 6 0" fill="none" stroke="#fff" />
      </svg>
      <svg width="16" height="14" viewBox="0 0 16 14" className="mr-[6px]">
        <path d="M.5.5h5v9h-5zM5.5 3h10v8h-10M2 13h8M7 11v2" fill="none" stroke="#fff" />
      </svg>
      <svg width="17" height="14" viewBox="0 0 17 14" className="mr-[11px]">
        <path d="M1 4.5h3L8 1v12L4 9.5H1zM10 4q2 3 0 6M12 2.5q3 4.5 0 9M14 1q4 6 0 12" fill="none" stroke="#fff" />
      </svg>
      <svg width="17" height="18" viewBox="0 0 17 18" className="mr-[12px]">
        <path d="M12 1L5 9q-3 4-1 6t5-2l6-7-3 0" fill="none" stroke="#fff" strokeWidth="1.2" />
        <path d="M1 16q2-2 3-1" fill="none" stroke="#fff" />
      </svg>
      <svg width="24" height="14" viewBox="0 0 24 14" className="mr-[10px]">
        <rect x=".5" y=".5" width="23" height="13" fill="none" stroke="#fff" />
        <path d="M3 3.5h18M3 6h18M3 8.5h18" stroke="#fff" strokeDasharray="1.5 1" />
        <path d="M6 11h12" stroke="#fff" />
      </svg>
      <div className="flex flex-col items-center w-[54px] text-[12px] leading-[17px] tracking-normal">
        <span>11:18 AM</span>
        <span>8/12/2022</span>
      </div>
      <div className="relative ml-[18px] mr-[18px] w-[22px] h-[24px]">
        <svg width="16" height="16" viewBox="0 0 16 16" className="absolute left-0 top-[1px]">
          <path d="M0 0h16v11h-6l-3 4v-4H0z" fill="#fff" />
          <path d="M3 3h10M3 5.5h10M3 8h10" stroke="#021a26" />
        </svg>
        <span className="absolute left-[6px] top-[9px] w-[16px] h-[16px] rounded-full bg-[#3a3a3a] text-white text-[11px] font-bold leading-[16px] text-center">1</span>
      </div>
    </div>
  </div>
)

export default function App() {
  return (
    <div className="w-[1024px] h-[768px] flex flex-col overflow-hidden bg-[#f5f5f5] font-['Open_Sans',sans-serif] tracking-[-0.25px]">
      <TitleBar />
      <Menu />
      <Toolbars />
      <div className="flex-1 min-h-0 flex bg-[#f0f0f0]">
        <LeftPanel />
        <Center />
        <RightPanel />
        <ResourceTab />
      </div>
      <StatusBar />
      <Taskbar />
    </div>
  )
}
